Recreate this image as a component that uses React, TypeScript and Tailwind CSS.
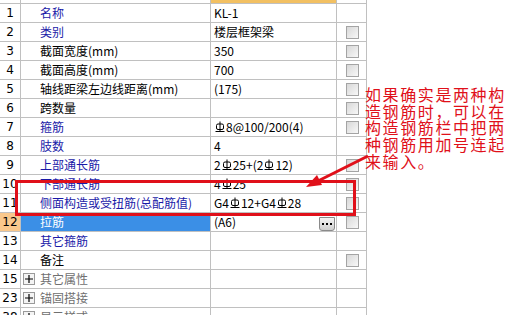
type Row = {
  no: string;
  name: string;
  tone: "blue" | "black" | "gray";
  value?: React.ReactNode;
  check?: boolean;
  expand?: boolean;
  selected?: boolean;
};

function Gang() {
  // 钢筋等级符号
  return (
    <svg width="10" height="12" viewBox="0 0 10 12" className="inline-block align-[-1px] mx-[1px]">
      <rect x="1.5" y="3" width="7" height="5.5" rx="1.5" fill="none" stroke="#000" strokeWidth="1" />
      <line x1="5" y1="0.5" x2="5" y2="11" stroke="#000" strokeWidth="1" />
      <line x1="0.5" y1="10.5" x2="9.5" y2="10.5" stroke="#000" strokeWidth="1" />
    </svg>
  );
}

const rows: Row[] = [
  { no: "1", name: "名称", tone: "blue", value: "KL-1" },
  { no: "2", name: "类别", tone: "blue", value: "楼层框架梁", check: true },
  { no: "3", name: "截面宽度(mm)", tone: "black", value: "350", check: true },
  { no: "4", name: "截面高度(mm)", tone: "black", value: "700", check: true },
  { no: "5", name: "轴线距梁左边线距离(mm)", tone: "black", value: "(175)", check: true },
  { no: "6", name: "跨数量", tone: "black", check: true },
  { no: "7", name: "箍筋", tone: "blue", value: <><Gang />8@100/200(4)</>, check: true },
  { no: "8", name: "肢数", tone: "blue", value: "4" },
  { no: "9", name: "上部通长筋", tone: "blue", value: <>2<Gang />25+(2<Gang />12)</>, check: true },
  { no: "10", name: "下部通长筋", tone: "blue", value: <>4<Gang />25</>, check: true },
  { no: "11", name: "侧面构造或受扭筋(总配筋值)", tone: "blue", value: <>G4<Gang />12+G4<Gang />28</>, check: true },
  { no: "12", name: "拉筋", tone: "blue", value: "(A6)", check: true, selected: true },
  { no: "13", name: "其它箍筋", tone: "blue" },
  { no: "14", name: "备注", tone: "black", check: true },
  { no: "15", name: "其它属性", tone: "gray", expand: true },
  { no: "23", name: "锚固搭接", tone: "gray", expand: true },
  { no: "38", name: "显示样式", tone: "gray", expand: true },
];

const toneClass = {
  blue: "text-[#1a1aa8]",
  black: "text-black",
  gray: "text-[#707070]",
};

function Check() {
  return (
    <span className="block w-[13px] h-[13px] border border-[#a4a4a4] bg-gradient-to-br from-[#d8d8d8] to-[#f8f8f8]" />
  );
}

export default function App() {
  return (
    <div className="relative w-[525px] h-[315px] overflow-hidden bg-white font-['Noto_Sans_CJK_SC',sans-serif] text-[12px] leading-none">
      <div className="w-[367px]">
        <div className="flex h-[3px]">
          <div className="w-[21px] border-r border-[#c0c0c0]" />
          <div className="w-[190px] border-r border-[#c0c0c0]" />
          <div className="w-[126px] border-r border-[#c0c0c0] bg-[#f2c062]" />
          <div className="w-[30px] border-r border-[#c0c0c0]" />
        </div>
        {rows.map((r) => (
          <div key={r.no} className="flex h-[19px] border-t border-[#c0c0c0]">
            <div
              className={`w-[21px] shrink-0 border-r border-[#c0c0c0] flex items-center justify-center text-[12px] font-['DejaVu_Sans',sans-serif] ${
                r.selected ? "bg-[#f9c88c]" : "bg-white"
              }`}
            >
              {r.no}
            </div>
            <div
              className={`w-[190px] shrink-0 border-r border-[#c0c0c0] flex items-center ${
                r.selected ? "bg-[#3b8fe6]" : ""
              } ${r.expand ? "pl-[2px]" : "pl-[19px]"}`}
            >
              {r.expand && (
                <span className="w-[12px] h-[12px] mr-[5px] border border-[#9a9a9a] bg-[#f4f4f4] flex items-center justify-center text-[12px] leading-none text-black">
                  <svg width="8" height="8" viewBox="0 0 8 8">
                    <path d="M0 4h8M4 0v8" stroke="#000" strokeWidth="1.2" />
                  </svg>
                </span>
              )}
              <span className={r.selected ? "text-white" : toneClass[r.tone]}>{r.name}</span>
            </div>
            <div className="w-[126px] shrink-0 border-r border-[#c0c0c0] flex items-center justify-between pl-[3px] pr-[1px] font-['Noto_Sans_CJK_SC',sans-serif] text-[12px] text-black">
              <span>{r.value}</span>
              {r.selected && (
                <span className="w-[16px] h-[14px] mt-[3px] border border-[#8a8a8a] rounded-b-[3px] bg-gradient-to-b from-[#f4f4f4] to-[#cfcfcf] flex items-center justify-center gap-[2px]">
                  <span className="w-[2px] h-[2px] bg-black" />
                  <span className="w-[2px] h-[2px] bg-black" />
                  <span className="w-[2px] h-[2px] bg-black" />
                </span>
              )}
            </div>
            <div className="w-[30px] shrink-0 border-r border-[#c0c0c0] flex items-center pl-[9px]">
              {r.check && <Check />}
            </div>
          </div>
        ))}
      </div>

      {/* 标注框 */}
      <div className="absolute left-[15px] top-[180px] w-[341px] h-[36px] border-[3px] border-[#e0101a]" />

      <svg className="absolute left-0 top-0" width="525" height="315" viewBox="0 0 525 315">
        <line x1="368" y1="156" x2="318" y2="181" stroke="#e0101a" strokeWidth="3" />
        <polygon points="306,187 317,175 322,185" fill="#e0101a" />
      </svg>

      <div className="absolute left-[365px] top-[86px] w-[150px] text-[#e0101a] text-[16px] leading-[16.7px] tracking-[1.6px] font-['Noto_Sans_CJK_SC',sans-serif]">
        如果确实是两种构
        <br />
        造钢筋时，可以在
        <br />
        构造钢筋栏中把两
        <br />
        种钢筋用加号连起
        <br />
        来输入。
      </div>
    </div>
  );
}
